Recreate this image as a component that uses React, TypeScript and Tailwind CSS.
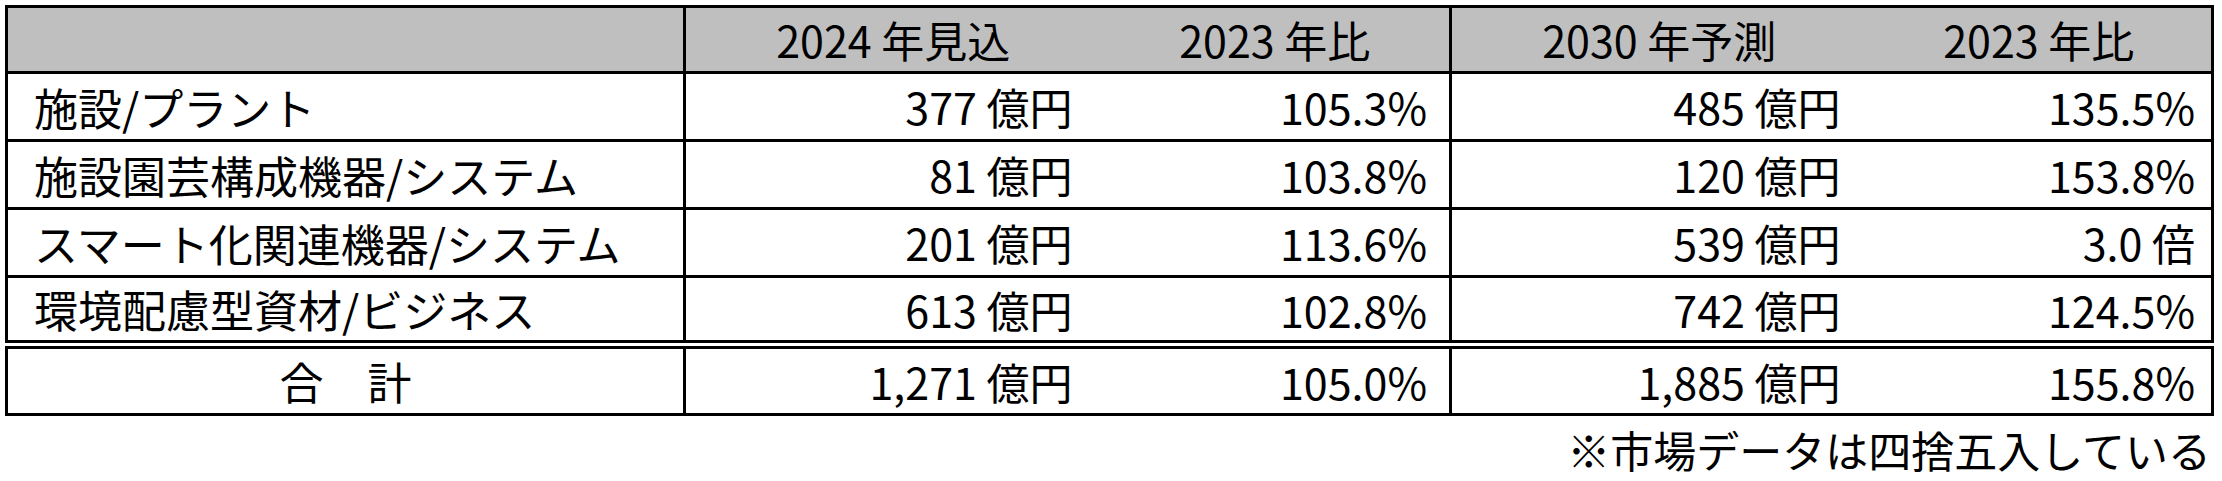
import React from "react";

type Row = { label: string; est: string; estRatio: string; fc: string; fcRatio: string };

const rows: Row[] = [
  { label: "施設/プラント", est: "377 億円", estRatio: "105.3%", fc: "485 億円", fcRatio: "135.5%" },
  { label: "施設園芸構成機器/システム", est: "81 億円", estRatio: "103.8%", fc: "120 億円", fcRatio: "153.8%" },
  { label: "スマート化関連機器/システム", est: "201 億円", estRatio: "113.6%", fc: "539 億円", fcRatio: "3.0 倍" },
  { label: "環境配慮型資材/ビジネス", est: "613 億円", estRatio: "102.8%", fc: "742 億円", fcRatio: "124.5%" },
];

const font = { fontFamily: '"Noto Sans CJK JP", "Noto Sans", sans-serif' };

// total row sits under a double rule
const totalTop = "border-t-[9px] [border-top-style:double] border-black";

export default function App() {
  return (
    <div className="min-h-screen bg-white text-black" style={font}>
      <div className="pt-[5px] pl-[5px]">
        <table className="w-[2206px] table-fixed border-collapse border-[3px] border-solid border-black text-[43px] leading-none">
          <colgroup>
            <col className="w-[678px]" />
            <col className="w-[416px]" />
            <col className="w-[350px]" />
            <col className="w-[416px]" />
            <col className="w-[346px]" />
          </colgroup>
          <thead>
            <tr className="h-[66px] bg-[#bfbfbf]">
              <th className="border-r-[3px] border-b-[3px] border-solid border-black font-normal"></th>
              <th className="border-b-[3px] border-solid border-black text-center font-normal">2024 年見込</th>
              <th className="border-r-[3px] border-b-[3px] border-solid border-black text-center font-normal">2023 年比</th>
              <th className="border-b-[3px] border-solid border-black text-center font-normal">2030 年予測</th>
              <th className="border-b-[3px] border-solid border-black text-center font-normal">2023 年比</th>
            </tr>
          </thead>
          <tbody>
            {rows.map((r) => (
              <tr key={r.label} className="h-[68px]">
                <td className="border-r-[3px] border-b-[3px] border-solid border-black pl-[26px] text-left text-[44px]">{r.label}</td>
                <td className="border-b-[3px] border-solid border-black pr-[28px] text-right">{r.est}</td>
                <td className="border-r-[3px] border-b-[3px] border-solid border-black pr-[22px] text-right">{r.estRatio}</td>
                <td className="border-b-[3px] border-solid border-black pr-[26px] text-right">{r.fc}</td>
                <td className="border-b-[3px] border-solid border-black pr-[16px] text-right">{r.fcRatio}</td>
              </tr>
            ))}
            <tr className="h-[70px]">
              <td className={`border-r-[3px] border-solid text-center text-[44px] ${totalTop}`}>合　計</td>
              <td className={`pr-[28px] text-right ${totalTop}`}>1,271 億円</td>
              <td className={`border-r-[3px] border-solid pr-[22px] text-right ${totalTop}`}>105.0%</td>
              <td className={`pr-[26px] text-right ${totalTop}`}>1,885 億円</td>
              <td className={`pr-[16px] text-right ${totalTop}`}>155.8%</td>
            </tr>
          </tbody>
        </table>
        <p className="mt-[12px] w-[2206px] text-right text-[43px] leading-none">※市場データは四捨五入している</p>
      </div>
    </div>
  );
}
